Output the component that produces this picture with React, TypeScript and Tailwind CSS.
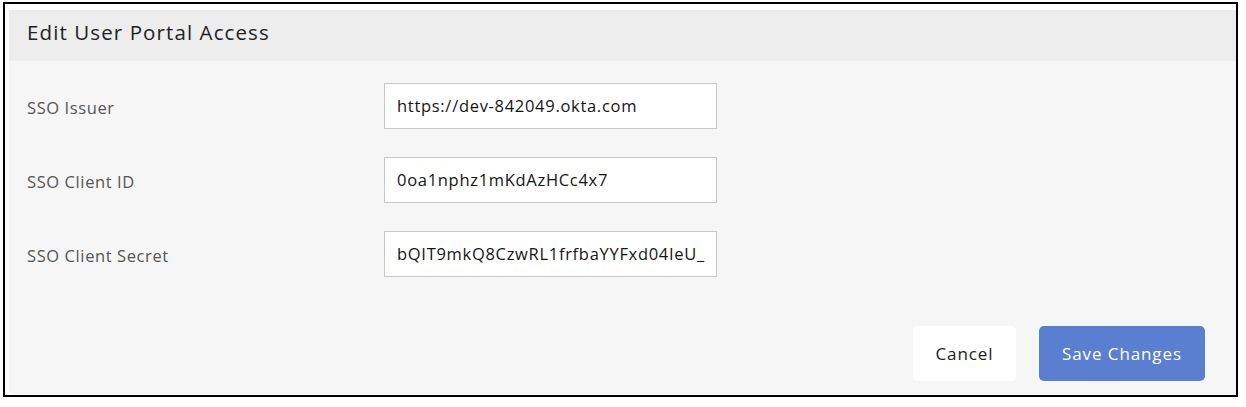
const font = { fontFamily: '"Open Sans", "Noto Sans", sans-serif' }

const fields = [
  { label: 'SSO Issuer', value: 'https://dev-842049.okta.com' },
  { label: 'SSO Client ID', value: '0oa1nphz1mKdAzHCc4x7' },
  { label: 'SSO Client Secret', value: 'bQIT9mkQ8CzwRL1frfbaYYFxd04IeU_' },
]

export default function App() {
  return (
    <div className="w-[1246px] h-[407px] bg-white pt-[2px] pl-[3px]" style={font}>
      <div className="w-[1235px] h-[395px] border-2 border-black bg-white pt-[6px] pl-[4px] pb-[1px] flex flex-col">
        <div className="h-[51px] bg-[#ededed] flex items-center pl-[18px] pb-[6px]">
          <h1 className="text-[20.5px] text-[#222] tracking-[1.1px]">Edit User Portal Access</h1>
        </div>
        <div className="flex-1 bg-[#f6f6f6] pt-[22px] pl-[18px] pr-[31px] pb-[13px] flex flex-col">
          <div className="flex flex-col gap-[28px]">
            {fields.map((f) => (
              <div key={f.label} className="flex items-center">
                <label className="w-[357px] text-[16.5px] text-[#555] tracking-[0.6px] pt-[4px]">{f.label}</label>
                <div className="w-[333px] h-[46px] bg-white border border-[#c8c8c8] flex items-center pl-[12px] text-[16.5px] tracking-[0.7px] text-[#151515] overflow-hidden whitespace-nowrap">
                  {f.value}
                </div>
              </div>
            ))}
          </div>
          <div className="mt-auto flex justify-end gap-[23px]">
            <button className="w-[103px] h-[55px] bg-white rounded-[5px] text-[17px] tracking-[0.9px] text-[#222]">Cancel</button>
            <button className="w-[166px] h-[55px] bg-[#5a7fd1] rounded-[5px] text-[17px] tracking-[0.9px] text-white">Save Changes</button>
          </div>
        </div>
      </div>
    </div>
  )
}
